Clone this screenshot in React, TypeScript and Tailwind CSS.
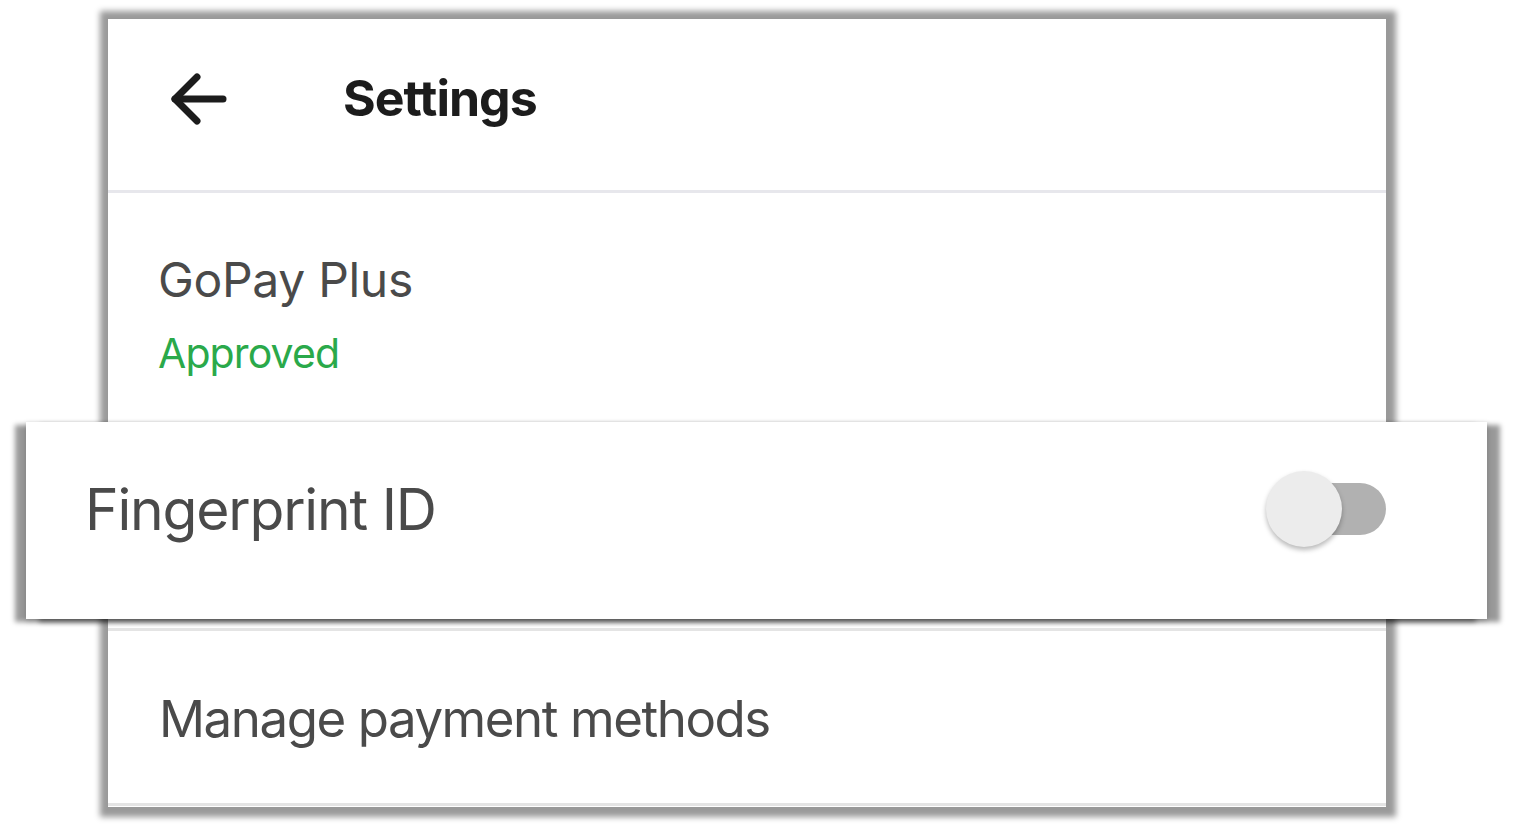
import React from 'react';

const BackArrow: React.FC = () => (
  <svg width="60" height="54" viewBox="0 0 60 54" fill="none" className="shrink-0">
    <path d="M6 27 H54" stroke="#1c1c1c" strokeWidth="7" strokeLinecap="round" />
    <path d="M28 5 L6 27 L28 49" stroke="#1c1c1c" strokeWidth="7" strokeLinecap="round" strokeLinejoin="round" />
  </svg>
);

const Toggle: React.FC = () => (
  <div className="relative w-[120px] h-[76px] shrink-0">
    <div className="absolute right-0 top-[12px] w-[96px] h-[52px] rounded-full bg-[#b1b1b1]" />
    <div className="absolute left-0 top-0 w-[76px] h-[76px] rounded-full bg-[#ececec] shadow-[0_3px_5px_rgba(0,0,0,0.28)]" />
  </div>
);

const App: React.FC = () => {
  return (
    <div className="w-[1513px] h-[827px] bg-white overflow-hidden pt-[19px] pl-[108px] font-['Inter',sans-serif]">
      <div className="w-[1278px] h-[788px] bg-white flex flex-col shadow-[1px_1px_6px_9px_rgba(0,0,0,0.4)]">
        {/* header */}
        <div className="h-[171px] flex items-start pt-[53px] pl-[61px]">
          <BackArrow />
          <h1 className="ml-[114px] mt-[1px] text-[50px] leading-none font-bold text-[#1c1c1c] tracking-[-1px]">
            Settings
          </h1>
        </div>
        <div className="h-[3px] bg-[#e7e7ec]" />

        {/* gopay plus */}
        <div className="h-[229px] pl-[50px] pt-[63px]">
          <div className="text-[48px] leading-none text-[#4a4a4a] tracking-[-0.3px]">GoPay Plus</div>
          <div className="mt-[29px] text-[41px] leading-none text-[#2aa94a] tracking-[-0.9px]">Approved</div>
        </div>

        {/* fingerprint row, lifted above the card */}
        <div className="relative z-10 -ml-[82px] -mr-[101px] h-[197px] bg-white pt-[49px] pl-[59px] pr-[101px] shadow-[-11px_3px_5px_0_rgba(0,0,0,0.4),13px_3px_5px_0_rgba(0,0,0,0.4),0_2px_6px_rgba(0,0,0,0.2)]">
          <div className="h-[76px] flex items-center justify-between">
            <span className="text-[57px] leading-none text-[#4a4a4a] tracking-[-1.2px]">Fingerprint ID</span>
            <Toggle />
          </div>
        </div>

        <div className="h-[9px]" />
        <div className="h-[3px] bg-[#e4e4e4]" />

        {/* manage payment methods */}
        <div className="h-[172px] pl-[51px] pt-[62px]">
          <div className="text-[51px] leading-none text-[#4a4a4a] tracking-[-1.45px]">Manage payment methods</div>
        </div>
        <div className="h-[3px] bg-[#e4e4e4]" />
      </div>
    </div>
  );
};

export default App;
